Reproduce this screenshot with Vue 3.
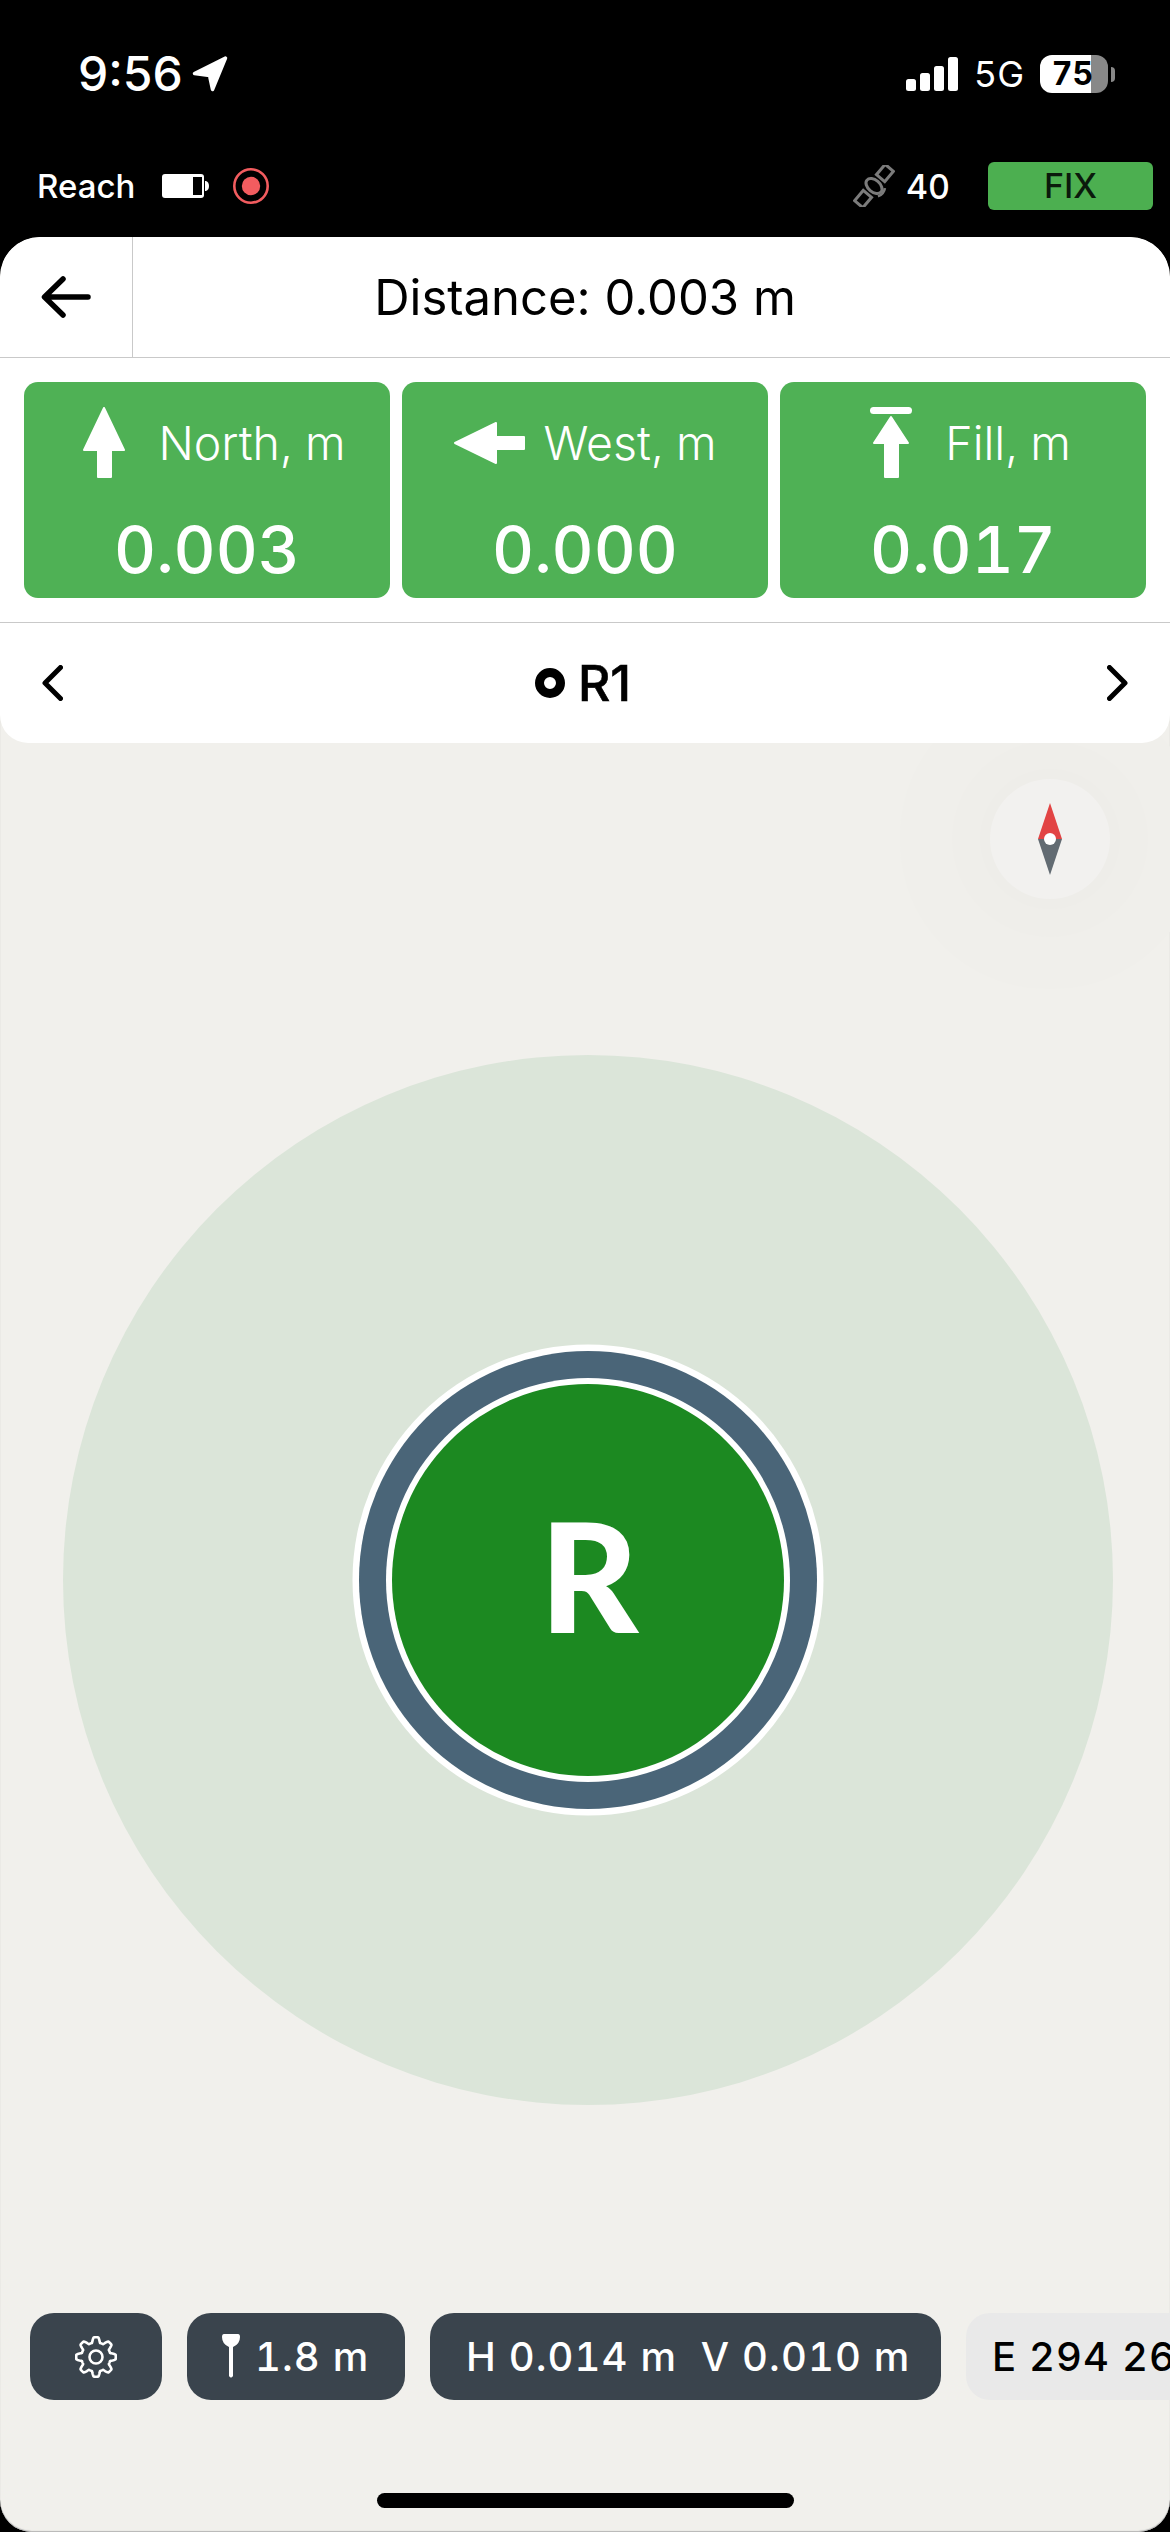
<script setup>
const cards = [
  { id: 'north', label: 'North, m', value: '0.003' },
  { id: 'west', label: 'West, m', value: '0.000' },
  { id: 'fill', label: 'Fill, m', value: '0.017' },
]
const bars = [12, 18, 25, 34]

// Gear outline: eight soft teeth around a circle
const gearPath = (() => {
  const pts = []
  const n = 240
  for (let i = 0; i < n; i++) {
    const a = (i / n) * Math.PI * 2
    const w = Math.max(-1, Math.min(1, 1.7 * Math.sin(8 * a + Math.PI / 2)))
    const r = 17.2 + 2.6 * w
    pts.push(`${(21 + r * Math.cos(a)).toFixed(2)} ${(21 + r * Math.sin(a)).toFixed(2)}`)
  }
  return 'M' + pts.join('L') + 'Z'
})()
</script>

<template>
  <div class="app">
    <header class="status">
      <div class="status-row top">
        <div class="time-wrap">
          <span class="time">9:56</span>
          <svg class="loc" width="36" height="36" viewBox="0 0 36 36"><path d="M33.500 2 L2.500 17.500 L17.500 19.500 L20.500 33.500 Z" fill="#fff" stroke="#fff" stroke-width="3.500" stroke-linejoin="round"/></svg>
        </div>
        <div class="sys">
          <div class="signal"><i v-for="h in bars" :key="h" class="bar" :style="{ height: h + 'px' }"></i></div>
          <span class="net">5G</span>
          <div class="ios-batt"><div class="ios-batt-body">75</div><i class="ios-batt-tip"></i></div>
        </div>
      </div>
      <div class="status-row second">
        <div class="device">
          <span class="reach">Reach</span>
          <svg width="47" height="24" viewBox="0 0 47 24"><rect x="0" y="0" width="42" height="24" rx="3" fill="#fff"/><rect x="31" y="3" width="9" height="18" fill="#000"/><path d="M43 7 h1 q3 1 3 5 t-3 5 h-1z" fill="#fff"/></svg>
          <svg width="36" height="36" viewBox="0 0 36 36"><circle cx="18" cy="18" r="16.700" fill="none" stroke="#f25c5f" stroke-width="2.600"/><circle cx="18" cy="18" r="9.200" fill="#f25c5f"/></svg>
        </div>
        <div class="gnss">
          <svg class="sat" width="42" height="42" viewBox="0 0 42 42">
            <g transform="translate(21 21) rotate(-50) scale(1.080)" fill="none" stroke="#7b7b7b" stroke-width="2.800">
              <rect x="-22" y="-5" width="12.500" height="10"/>
              <rect x="9.500" y="-5" width="12.500" height="10"/>
              <ellipse cx="0" cy="0" rx="5.500" ry="8.500"/>
              <path d="M-5 9 q5 3 10 0" stroke-width="2.400"/>
            </g>
          </svg>
          <span class="sat-count">40</span>
          <span class="fix">FIX</span>
        </div>
      </div>
    </header>

    <main class="sheet">
      <section class="panel">
        <div class="title-row">
          <div class="back">
            <svg width="50" height="42" viewBox="0 0 50 42"><path d="M47 21 H4 M22 3 L3.500 21 L22 39" fill="none" stroke="#000" stroke-width="5.500" stroke-linecap="round" stroke-linejoin="round"/></svg>
          </div>
          <h1 class="title">Distance: 0.003 m</h1>
        </div>

        <div class="cards">
          <div v-for="c in cards" :key="c.id" class="card">
            <div class="card-head">
              <svg class="dir" width="72" height="72" viewBox="0 0 72 72">
                <path v-if="c.id === 'north'" d="M36 1 L56 43 H43 V70 H30 V43 H16 Z" fill="#fff" stroke="#fff" stroke-width="2" stroke-linejoin="round"/>
                <path v-else-if="c.id === 'west'" d="M1 36 L42 16 V30 H70 V42 H42 V56 Z" fill="#fff" stroke="#fff" stroke-width="2" stroke-linejoin="round"/>
                <g v-else fill="#fff">
                  <rect x="15" y="0" width="42" height="7" rx="3.500"/>
                  <path d="M36 10 L53 36 H43 V70 H30 V36 H19 Z" stroke="#fff" stroke-width="2" stroke-linejoin="round"/>
                </g>
              </svg>
              <span class="card-label">{{ c.label }}</span>
            </div>
            <div class="card-value">{{ c.value }}</div>
          </div>
        </div>

        <div class="point-row">
          <svg width="21" height="36" viewBox="0 0 21 36"><path d="M18.500 2.500 L3 18 L18.500 33.500" fill="none" stroke="#000" stroke-width="5" stroke-linecap="round" stroke-linejoin="round"/></svg>
          <div class="point">
            <i class="point-dot"></i>
            <span class="point-name">R1</span>
          </div>
          <svg width="21" height="36" viewBox="0 0 21 36"><path d="M2.500 2.500 L18 18 L2.500 33.500" fill="none" stroke="#000" stroke-width="5" stroke-linecap="round" stroke-linejoin="round"/></svg>
        </div>
      </section>

      <section class="stage">
        <div class="compass">
          <svg width="24" height="72" viewBox="0 0 24 72">
            <path d="M12 0 L24 36 H0 Z" fill="#e24444"/>
            <path d="M12 72 L24 36 H0 Z" fill="#626b72"/>
            <circle cx="12" cy="36" r="6" fill="#fff"/>
          </svg>
        </div>
        <div class="zone">
          <div class="rover-ring">
            <div class="rover"><span class="rover-letter">R</span></div>
          </div>
        </div>
      </section>

      <nav class="pills">
        <div class="pill dark gear">
          <svg width="42" height="42" viewBox="0 0 42 42"><path :d="gearPath" fill="none" stroke="#fff" stroke-width="2.600" stroke-linejoin="round"/><circle cx="21" cy="21" r="6.500" fill="none" stroke="#fff" stroke-width="2.600"/></svg>
        </div>
        <div class="pill dark pole">
          <svg width="18" height="44" viewBox="0 0 18 44"><path d="M2 0 H16 Q18 0 18 3 Q18 10 11 13 V42 Q9 45 7 42 V13 Q0 10 0 3 Q0 0 2 0Z" fill="#fff"/></svg>
          <span>1.8 m</span>
        </div>
        <div class="pill dark acc">H 0.014 m&nbsp; V 0.010 m</div>
        <div class="pill light">E 294 267.145 m</div>
      </nav>

      <div class="home-wrap"><i class="home"></i></div>
    </main>
  </div>
</template>

<style scoped>
.app {
  width: 1170px;
  height: 2532px;
  background: #000;
  display: flex;
  flex-direction: column;
  overflow: hidden;
  font-family: Inter, "Liberation Sans", sans-serif;
  font-variant-numeric: tabular-nums;
}
.status {
  height: 237px;
  flex: none;
  padding-top: 55px;
  box-sizing: border-box;
  color: #fff;
}
.status-row {
  display: flex;
  justify-content: space-between;
  align-items: center;
}
.top {
  height: 38px;
  padding: 0 55px 0 78px;
}
.second {
  height: 48px;
  margin-top: 69px;
  padding: 0 17px 0 37px;
}
.time-wrap,
.sys,
.device,
.gnss {
  display: flex;
  align-items: center;
}
.time-wrap { gap: 9px; }
.time {
  font-size: 48px;
  font-weight: 500;
  line-height: 38px;
  font-variant-numeric: normal;
}
.sys { gap: 16px; }
.signal {
  display: flex;
  align-items: flex-end;
  gap: 4.500px;
  height: 34px;
}
.bar {
  display: block;
  width: 9.500px;
  background: #fff;
  border-radius: 2.500px;
}
.net {
  font-size: 36px;
  font-weight: 400;
  line-height: 38px;
}
.ios-batt {
  display: flex;
  align-items: center;
  gap: 3px;
}
.ios-batt-body {
  width: 68px;
  height: 38px;
  border-radius: 12px;
  background: linear-gradient(90deg, #fff 75%, #888 75%);
  color: #000;
  font-size: 32px;
  font-weight: 700;
  line-height: 38px;
  text-align: center;
  padding-right: 3px;
  box-sizing: border-box;
}
.ios-batt-tip {
  display: block;
  width: 4px;
  height: 15px;
  background: #888;
  border-radius: 0 4px 4px 0;
}
.device { gap: 27px; }
.device svg:last-child { margin-left: -3px; }
.reach {
  font-size: 33px;
  font-weight: 500;
}
.gnss { gap: 10px; }
.sat { margin-right: 1px; }
.sat-count {
  font-size: 34px;
  font-weight: 500;
}
.fix {
  width: 165px;
  height: 48px;
  margin-left: 28px;
  background: #4caf50;
  border-radius: 6px;
  color: #0b1a0c;
  font-size: 34px;
  font-weight: 500;
  line-height: 48px;
  text-align: center;
}
.sheet {
  flex: 1;
  min-height: 0;
  background: #f1f0ec;
  border-radius: 40px 40px 32px 32px;
  box-shadow: inset 0 -1px 1px #b5b5b5;
  display: flex;
  flex-direction: column;
  overflow: hidden;
}
.panel {
  flex: none;
  position: relative;
  z-index: 1;
  background: #fff;
  border-radius: 40px 40px 28px 28px;
  color: #000;
}
.title-row {
  display: flex;
  height: 121px;
  box-sizing: border-box;
  border-bottom: 1px solid #c9c9c9;
}
.back {
  width: 133px;
  flex: none;
  box-sizing: border-box;
  border-right: 1px solid #c9c9c9;
  display: flex;
  align-items: center;
  justify-content: center;
}
.title {
  flex: 1;
  margin: 0;
  padding-right: 133px;
  font-size: 49px;
  font-weight: 400;
  line-height: 122px;
  text-align: center;
  font-variant-numeric: normal;
}
.cards {
  display: grid;
  grid-template-columns: repeat(3, 1fr);
  gap: 12px;
  padding: 24px;
  border-bottom: 1px solid #c9c9c9;
}
.card {
  height: 216px;
  box-sizing: border-box;
  padding-top: 25px;
  background: #4fb155;
  border-radius: 14px;
  color: #fff;
  display: flex;
  flex-direction: column;
  align-items: center;
}
.card-head {
  display: flex;
  align-items: center;
  gap: 18px;
  height: 72px;
}
.dir { flex: none; }
.card-label {
  font-size: 46.500px;
  font-weight: 300;
  line-height: 72px;
}
.card-value {
  margin-top: 39px;
  font-size: 65px;
  font-weight: 500;
  line-height: 64px;
}
.point-row {
  height: 120px;
  padding: 0 42px;
  display: flex;
  align-items: center;
  justify-content: space-between;
}
.point {
  display: flex;
  align-items: center;
  gap: 13px;
  padding-right: 4px;
}
.point-dot {
  display: block;
  width: 30px;
  height: 30px;
  box-sizing: border-box;
  border: 9px solid #000;
  border-radius: 50%;
}
.point-name {
  font-size: 50px;
  font-weight: 500;
  line-height: 60px;
  font-variant-numeric: normal;
  -webkit-text-stroke: 0.6px #000;
}
.stage {
  flex: 1;
  min-height: 0;
  position: relative;
  padding: 104px 0 0 5px;
  display: flex;
  align-items: center;
  justify-content: center;
}
.compass {
  position: absolute;
  left: 990px;
  top: 36px;
  width: 120px;
  height: 120px;
  border-radius: 50%;
  background: #f2f1ef;
  box-shadow: 0 0 0 10px #eeede9, 0 0 0 38px #efeeea, 0 0 0 90px #f0efeb;
  display: flex;
  align-items: center;
  justify-content: center;
}
.zone {
  width: 1050px;
  height: 1050px;
  border-radius: 50%;
  background: #dbe5d9;
  display: flex;
  align-items: center;
  justify-content: center;
}
.rover-ring {
  width: 458px;
  height: 458px;
  box-sizing: border-box;
  border-radius: 50%;
  background: #4a6578;
  box-shadow: 0 0 0 6.500px #fff;
  display: flex;
  align-items: center;
  justify-content: center;
}
.rover {
  width: 392px;
  height: 392px;
  border-radius: 50%;
  background: #1c8921;
  box-shadow: 0 0 0 6px #fff;
  color: #fff;
  display: flex;
  align-items: center;
  justify-content: center;
}
.rover-letter {
  font-family: Lato, Inter, sans-serif;
  font-size: 152px;
  font-weight: 900;
  line-height: 1;
  margin: -12px 0 0 3px;
}
.pills {
  display: flex;
  flex: none;
  gap: 25px;
  padding-left: 30px;
  overflow: hidden;
  font-size: 40px;
  font-weight: 500;
  letter-spacing: 1.100px;
}
.pill {
  flex: none;
  height: 87px;
  box-sizing: border-box;
  border-radius: 24px;
  display: flex;
  align-items: center;
  white-space: nowrap;
}
.dark {
  background: #3a444d;
  color: #fff;
}
.light {
  background: #e9e9e9;
  color: #000;
  padding: 0 26px;
}
.gear {
  width: 132px;
  justify-content: center;
}
.pole {
  width: 218px;
  padding-left: 35px;
  gap: 15px;
}
.pole svg { margin-top: -1px; }
.acc {
  width: 511px;
  padding-left: 36px;
}
.home-wrap {
  flex: none;
  height: 132px;
  box-sizing: border-box;
  padding-top: 93px;
  display: flex;
  justify-content: center;
}
.home {
  display: block;
  width: 417px;
  height: 15px;
  border-radius: 8px;
  background: #000;
}
</style>
